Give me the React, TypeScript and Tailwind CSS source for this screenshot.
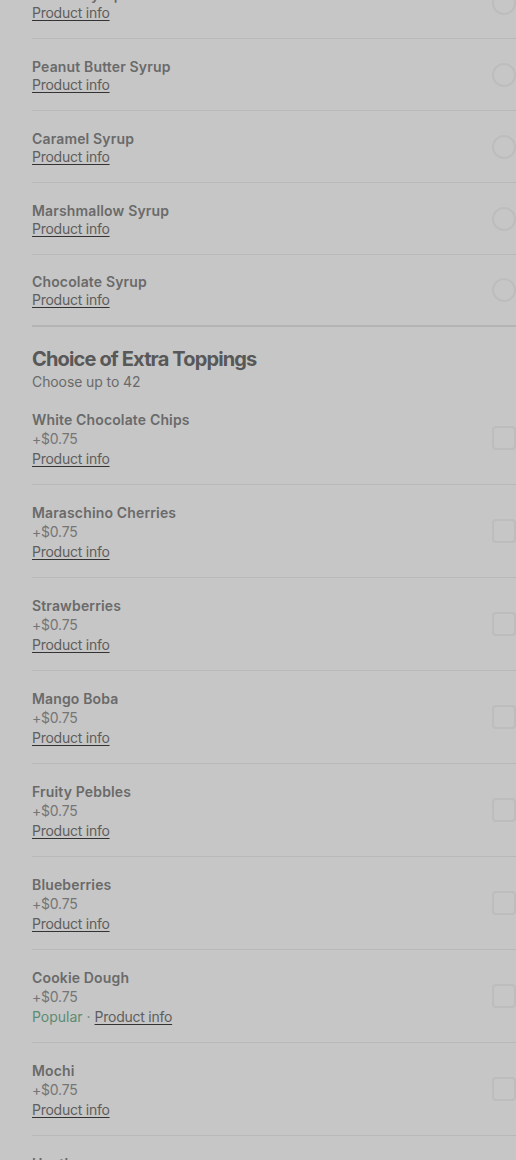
const syrups = ['Vanilla Syrup', 'Peanut Butter Syrup', 'Caramel Syrup', 'Marshmallow Syrup', 'Chocolate Syrup']

const toppings = [
  { name: 'White Chocolate Chips' },
  { name: 'Maraschino Cherries' },
  { name: 'Strawberries' },
  { name: 'Mango Boba' },
  { name: 'Fruity Pebbles' },
  { name: 'Blueberries' },
  { name: 'Cookie Dough', popular: true },
  { name: 'Mochi' },
  { name: 'Heath' },
]

function ProductInfo() {
  return (
    <span className="underline decoration-[#333333] underline-offset-2 tracking-[-0.25px] text-[#5e5e5e]">Product info</span>
  )
}

export default function App() {
  return (
    <div className="min-h-[1160px] bg-[#c6c6c6] overflow-hidden font-['Inter',sans-serif] text-[14px]">
      <div className="pl-8 -mt-[33px]">
        {/* Syrup radio list */}
        {syrups.map((s, i) => (
          <div
            key={s}
            className={`flex items-center h-[72px] ${i === syrups.length - 1 ? 'border-b-2 border-[#b4b4b4]' : 'border-b border-[#b9b9b9]'}`}
          >
            <div className="flex-1 flex flex-col pt-[1px]">
              <span className="font-semibold leading-[18px] tracking-[0.15px] text-[#6a6a6a]">{s}</span>
              <span className="leading-[17px]">
                <ProductInfo />
              </span>
            </div>
            <div className="size-6 rounded-full border-2 border-[#bdbdbd] shrink-0" />
          </div>
        ))}

        {/* Toppings */}
        <div className="pt-[19px]">
          <h2 className="text-[20px] font-bold tracking-[-0.85px] leading-[26px] text-[#585858]">Choice of Extra Toppings</h2>
          <p className="text-[#6a6a6a] tracking-[-0.1px] leading-[20px]">Choose up to 42</p>
        </div>
        {toppings.map((t) => (
          <div key={t.name} className="flex items-center h-[93px] border-b border-[#b9b9b9]">
            <div className="flex-1 flex flex-col leading-[19.5px] pt-[2px]">
              <span className="font-semibold tracking-[0.15px] text-[#6a6a6a]">{t.name}</span>
              <span className="text-[#757575] tracking-[-0.2px]">+$0.75</span>
              <span>
                {t.popular && <span className="text-[#5c8c73]">Popular · </span>}
                <ProductInfo />
              </span>
            </div>
            <div className="size-6 rounded-[4px] border-2 border-[#bdbdbd] shrink-0" />
          </div>
        ))}
      </div>
    </div>
  )
}
